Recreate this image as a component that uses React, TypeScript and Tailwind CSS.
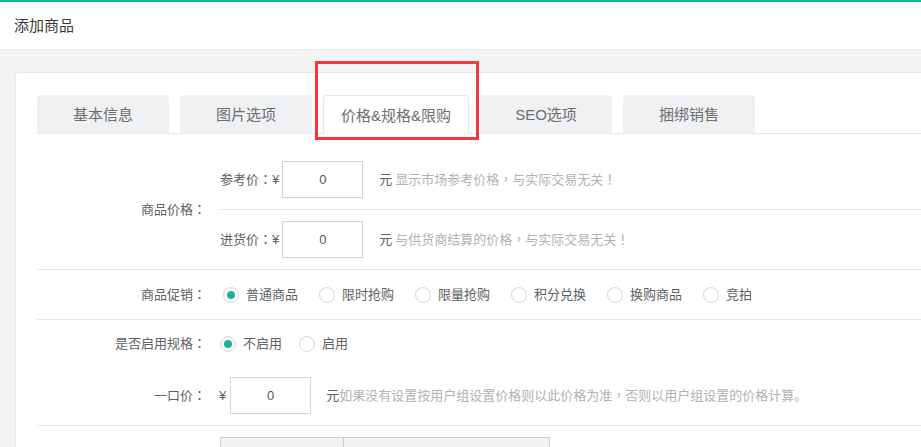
import React from 'react';

const tabs = [
  { label: '基本信息', active: false },
  { label: '图片选项', active: false },
  { label: '价格&规格&限购', active: true },
  { label: 'SEO选项', active: false },
  { label: '捆绑销售', active: false },
];

const promos = ['普通商品', '限时抢购', '限量抢购', '积分兑换', '换购商品', '竞拍'];

// full-width punctuation sits centred in the original font
const Txt: React.FC<{ s: string }> = ({ s }) => (
  <>
    {s.split(/([，：！])/).map((part, i) =>
      /^[，：！]$/.test(part) ? (
        <span key={i} className="font-['Noto_Sans_CJK_TC',sans-serif]">{part}</span>
      ) : (
        <React.Fragment key={i}>{part}</React.Fragment>
      )
    )}
  </>
);

const Radio: React.FC<{ checked?: boolean; label: string }> = ({ checked, label }) => (
  <label className="flex items-center">
    <span className="w-4 h-4 rounded-full border border-[#d5dadc] bg-white flex items-center justify-center shadow-[inset_0_1px_1px_rgba(0,0,0,0.04)]">
      {checked && <span className="w-[8px] h-[8px] rounded-full bg-[#1ab394]"></span>}
    </span>
    <span className="ml-[7px] text-[#5e6163]">{label}</span>
  </label>
);

const PriceBox: React.FC = () => (
  <div className="w-[81px] h-[37px] border border-[#cfd6d9] bg-white flex items-center justify-center text-[13px] text-[#555]">
    0
  </div>
);

const App: React.FC = () => {
  return (
    <div className="relative w-[921px] h-[447px] overflow-hidden bg-[#f3f3f4] font-['Liberation_Sans','Noto_Sans_CJK_SC',sans-serif]">
      {/* Header */}
      <div className="h-[50px] bg-white border-t-2 border-[#1ab394] border-b border-b-[#e7eaec] flex items-center px-[14px] pt-px">
        <span className="text-[15px] text-[#3a3a3a]">添加商品</span>
      </div>

      <div className="pl-[15px] pt-[22px]">
        <div className="w-[1000px] bg-white border border-[#e7eaec] rounded-[3px] pt-[22px] pl-[21px]">
          {/* Tabs */}
          <div className="flex items-start gap-[11px] border-b border-[#e7eaec]">
            {tabs.map((t) =>
              t.active ? (
                <div
                  key={t.label}
                  className="w-[146px] h-[39px] -mb-px pt-[2px] bg-white border border-b-0 border-[#e5e6e7] rounded-t-[4px] flex items-center justify-center text-[15px] text-[#6b6e70]"
                >
                  {t.label}
                </div>
              ) : (
                <div
                  key={t.label}
                  className="w-[132px] h-[38px] pt-[2px] bg-[#f0f1f3] rounded-t-[4px] flex items-center justify-center text-[15px] text-[#6b6e70]"
                >
                  {t.label}
                </div>
              )
            )}
          </div>

          {/* Form */}
          <div className="text-[13px] text-[#5e6163]">
            {/* 商品价格 */}
            <div className="flex items-center border-b border-[#e7eaec] pt-[27px] pb-[11px]">
              <div className="w-[169px] text-right"><Txt s="商品价格：" /></div>
              <div className="flex-1 ml-[14px]">
                <div className="flex items-center pb-[11px] border-b border-[#e7eaec]">
                  <span><Txt s="参考价：¥" /></span>
                  <span className="ml-[3px]"><PriceBox /></span>
                  <span className="ml-[16px]">元</span>
                  <span className="ml-[3px] text-[#aeb3b6]"><Txt s="显示市场参考价格，与实际交易无关！" /></span>
                </div>
                <div className="flex items-center pt-[11px]">
                  <span><Txt s="进货价：¥" /></span>
                  <span className="ml-[3px]"><PriceBox /></span>
                  <span className="ml-[16px]">元</span>
                  <span className="ml-[3px] text-[#aeb3b6]"><Txt s="与供货商结算的价格，与实际交易无关！" /></span>
                </div>
              </div>
            </div>

            {/* 商品促销 */}
            <div className="flex items-center h-[50px] border-b border-[#e7eaec]">
              <div className="w-[169px] text-right"><Txt s="商品促销：" /></div>
              <div className="ml-[17px] flex items-center gap-[21px]">
                {promos.map((p, i) => (
                  <Radio key={p} label={p} checked={i === 0} />
                ))}
              </div>
            </div>

            {/* 是否启用规格 */}
            <div className="flex items-center h-[47px]">
              <div className="w-[169px] text-right"><Txt s="是否启用规格：" /></div>
              <div className="ml-[14px] flex items-center gap-[17px]">
                <Radio label="不启用" checked />
                <Radio label="启用" />
              </div>
            </div>

            {/* 一口价 */}
            <div className="flex items-center pt-[10px] pb-[11px] border-b border-[#e7eaec]">
              <div className="w-[169px] text-right"><Txt s="一口价：" /></div>
              <div className="ml-[13px] flex items-center">
                <span>¥</span>
                <span className="ml-[4px]"><PriceBox /></span>
                <span className="ml-[15px]">元</span>
                <span className="text-[#aeb3b6]"><Txt s="如果没有设置按用户组设置价格则以此价格为准，否则以用户组设置的价格计算。" /></span>
              </div>
            </div>

            {/* 规格表 */}
            <div className="pt-[11px] pl-[183px] pb-4">
              <div className="flex w-[330px] h-[40px] border border-[#cdcdcd] bg-[#f2f2f2]">
                <div className="w-[123px] border-r border-[#cdcdcd]"></div>
                <div className="flex-1"></div>
              </div>
            </div>
          </div>
        </div>
      </div>

      {/* annotation */}
      <div className="absolute left-[315px] top-[61px] w-[164px] h-[79px] border-[3px] border-[#f03a3a]"></div>
    </div>
  );
};

export default App;
